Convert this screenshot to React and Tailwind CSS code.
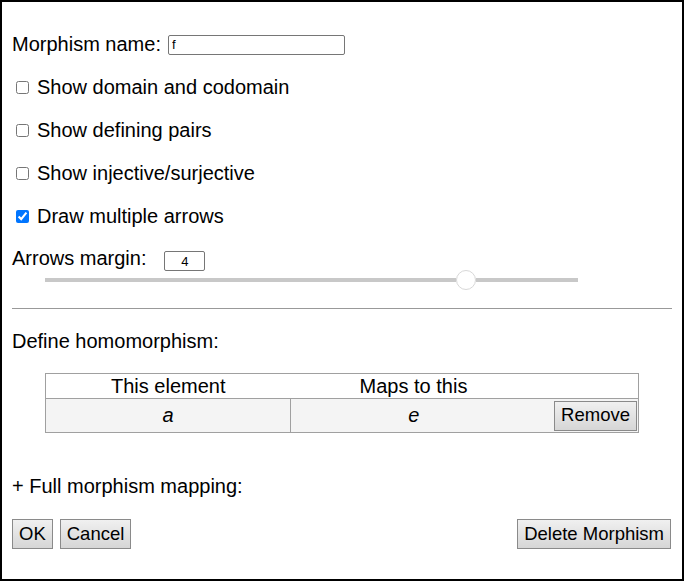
const btn =
  "h-[30px] px-[6px] text-[18.5px] leading-none border border-[#8a8a8a] bg-gradient-to-b from-[#f0f0f0] to-[#d6d6d6] text-black";

const CheckRow = ({ label, checked }) => (
  <label className="h-[43px] flex items-center">
    <input
      type="checkbox"
      defaultChecked={checked}
      className="w-[13px] h-[13px] ml-[4px] mr-[8px]"
    />
    <span>{label}</span>
  </label>
);

export default function App() {
  return (
    <div
      className="w-[684px] h-[581px] border-2 border-black bg-white px-[10px] pt-[21px] text-[20px] leading-[23px] text-black"
      style={{ fontFamily: '"Liberation Sans", Arial, sans-serif' }}
    >
      <div className="h-[43px] flex items-center">
        <span>Morphism name:</span>
        <input
          type="text"
          defaultValue="f"
          className="ml-[7px] w-[177px] h-[20px] border border-[#767676] rounded-[2px] px-[3px] text-[13px] leading-none"
        />
      </div>

      <CheckRow label="Show domain and codomain" />
      <CheckRow label="Show defining pairs" />
      <CheckRow label="Show injective/surjective" />
      <CheckRow label="Draw multiple arrows" checked />

      <div className="h-[32px] flex items-end">
        <span>Arrows margin:</span>
        <input
          type="text"
          defaultValue="4"
          className="ml-[18px] mb-[-1px] w-[41px] h-[20px] border border-[#767676] rounded-[2px] text-center text-[13px] leading-none"
        />
      </div>

      <div className="h-[20px] ml-[33px] w-[533px] flex items-center">
        <div className="w-[411px] h-[4px] bg-[#c8c8c8]" />
        <div className="w-[20px] h-[20px] rounded-full border border-[#d8d8d8] bg-white" />
        <div className="flex-1 h-[4px] bg-[#c8c8c8]" />
      </div>

      <div className="mt-[18px] border-t border-[#999]" />

      <div className="mt-[21px]">Define homomorphism:</div>

      <table className="mt-[20px] ml-[33px] w-[594px] border border-[#a0a0a0] border-collapse">
        <tbody>
          <tr className="h-[25px]">
            <th className="w-[245px] font-normal text-center p-0">This element</th>
            <th className="w-[246px] font-normal text-center p-0">Maps to this</th>
            <th className="p-0" />
          </tr>
          <tr className="h-[34px] bg-[#f4f4f4] border-t border-[#a0a0a0]">
            <td className="text-center italic p-0 border-r border-[#a0a0a0]">a</td>
            <td className="text-center italic p-0">e</td>
            <td className="p-0 text-right pr-[1px]">
              <button className={btn}>Remove</button>
            </td>
          </tr>
        </tbody>
      </table>

      <div className="mt-[42px]">+ Full morphism mapping:</div>

      <div className="mt-[21px] flex items-center">
        <button className={btn}>OK</button>
        <button className={btn + " ml-[7px]"}>Cancel</button>
        <button className={btn + " ml-auto mr-[1px]"}>Delete Morphism</button>
      </div>
    </div>
  );
}
